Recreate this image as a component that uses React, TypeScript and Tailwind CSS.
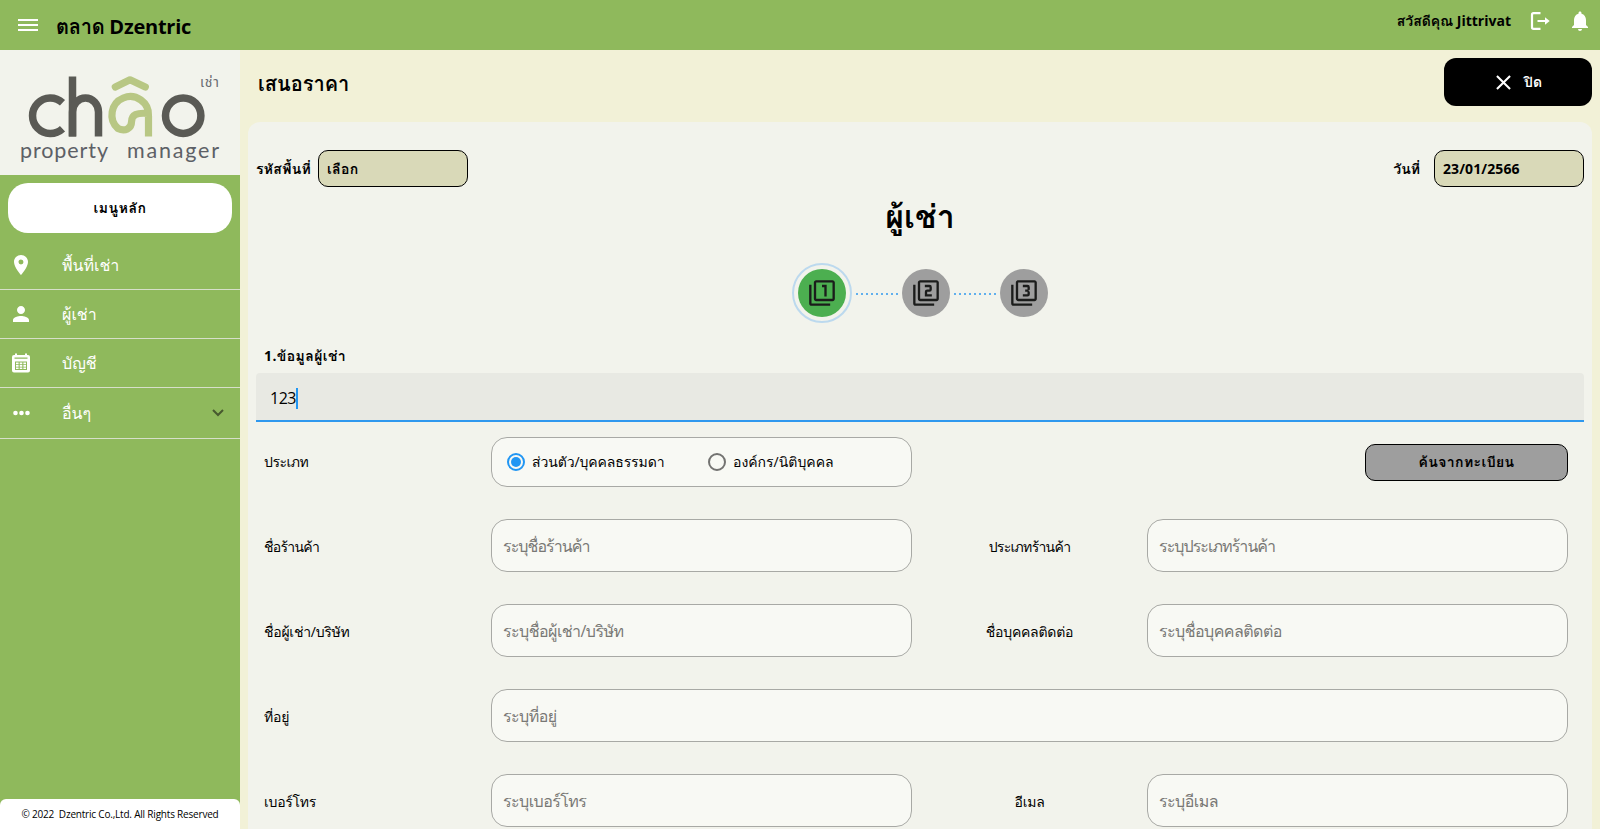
import React from "react";
import {
  MdPlace,
  MdPerson,
  MdNotifications,
  MdClose,
  MdFilter1,
  MdFilter2,
  MdFilter3,
} from "react-icons/md";

function MenuIcon() {
  return (
    <svg width="24" height="24" viewBox="0 0 24 24" fill="#fff">
      <path d="M2 6h20v2H2zM2 11h20v2H2zM2 16h20v2H2z" />
    </svg>
  );
}

function CalendarIcon() {
  return (
    <svg width="18" height="20" viewBox="0 0 18 20" fill="#fff">
      <path
        fillRule="evenodd"
        d="M2 2h1V.5h2V2h8V.5h2V2h1a2 2 0 0 1 2 2v13.500a2 2 0 0 1-2 2H2a2 2 0 0 1-2-2V4a2 2 0 0 1 2-2zM2.500 4.500v1.200h13V4.500zM3 8.500v8.500h12V8.500z"
      />
      <path d="M4 9.500h2.600v1.800H4zM7.700 9.500h2.600v1.800H7.700zM11.400 9.500H14v1.800h-2.600zM4 12h2.600v1.800H4zM7.700 12h2.600v1.800H7.700zM11.400 12H14v1.800h-2.600zM4 14.500h2.600v1.500H4zM7.700 14.500h2.600v1.500H7.700zM11.400 14.500H14v1.500h-2.600z" />
    </svg>
  );
}

function DotsIcon() {
  return (
    <svg width="17" height="6" viewBox="0 0 17 6" fill="#fff">
      <circle cx="2.500" cy="3" r="2.300" />
      <circle cx="8.500" cy="3" r="2.300" />
      <circle cx="14.500" cy="3" r="2.300" />
    </svg>
  );
}

function LogoutIcon() {
  return (
    <svg width="20" height="20" viewBox="0 0 20 20" fill="none" stroke="#fff" strokeWidth="2.200">
      <path d="M10.500 2.200H3.500a1.500 1.500 0 0 0-1.500 1.500v12.600a1.500 1.500 0 0 0 1.500 1.500h7" />
      <path d="M7.500 10h9" strokeWidth="2" />
      <path d="M15 6.300L19.700 10L15 13.700z" fill="#fff" stroke="none" />
    </svg>
  );
}

function Logo() {
  return (
    <svg width="240" height="125" viewBox="0 50 240 125" fill="none">
      <g stroke="#5a5a55" strokeWidth="7.500">
        <path d="M62.500 102.700A17.800 17.800 0 1 0 62.500 128.700" />
        <path d="M72.500 76.500V136.500" />
        <path d="M72.500 136.500V112a13 14 0 0 1 26 0V136.500" />
        <circle cx="183.200" cy="115.700" r="17.700" />
      </g>
      <g stroke="#b8c784" strokeWidth="7.200">
        <path d="M115.300 87L130 79.800L145.300 87" strokeLinecap="round" strokeLinejoin="round" />
        <path d="M148.500 136.500V116A18.300 18.300 0 1 0 118 128.500C125 132 131.500 128.500 131.500 122C131.500 114.500 137 112.500 148 113.500" />
      </g>
      <g fill="#5d6066" className="font-[Lato]">
        <text x="20" y="157.500" textLength="88" fontSize="21.500">property</text>
        <text x="127" y="157.500" textLength="92" fontSize="21.500">manager</text>
      </g>
      <text x="200" y="87" textLength="19" fontSize="14" fill="#6a6d72" className="font-['Noto_Sans_Thai']">เช่า</text>
    </svg>
  );
}

const menu = [
  { label: "พื้นที่เช่า", icon: <MdPlace size={24} />, h: "h-[49px]" },
  { label: "ผู้เช่า", icon: <MdPerson size={24} />, h: "h-[49px]" },
  { label: "บัญชี", icon: <CalendarIcon />, h: "h-[49px]" },
  { label: "อื่นๆ", icon: <DotsIcon />, h: "h-[51px]" },
];

function Field({ text }: { text: string }) {
  const tracking = text.includes("ร้านค้า") ? "tracking-[-0.95px]" : "tracking-[-0.55px]";
  return (
    <div className={`flex h-[53px] items-center rounded-2xl border border-[#a8a9a5] bg-[#f8f9f4] px-[11px] text-base text-[#787875] ${tracking}`}>
      {text}
    </div>
  );
}

function Label({ text }: { text: string }) {
  const tracking = text.includes("ร้านค้า") ? "tracking-[-0.7px]" : "tracking-[-0.25px]";
  return <span className={`text-sm ${tracking}`}>{text}</span>;
}

function Row({ a, pa, b, pb }: { a: string; pa: string; b?: string; pb?: string }) {
  return (
    <div className="flex h-[53px] shrink-0 items-center">
      <div className="w-[227px]">
        <Label text={a} />
      </div>
      <div className={b ? "w-[421px]" : "w-[1077px]"}>
        <Field text={pa} />
      </div>
      {b && pb && (
        <>
          <div className="w-[235px] text-center">
            <Label text={b} />
          </div>
          <div className="w-[421px]">
            <Field text={pb} />
          </div>
        </>
      )}
    </div>
  );
}

function Dots() {
  return (
    <div className="flex w-[50px] items-center justify-center gap-[3px] pt-px">
      {Array.from({ length: 9 }, (_, i) => (
        <span key={i} className="size-[2px] rounded-full bg-[#2f98ee]" />
      ))}
    </div>
  );
}

export default function App() {
  return (
    <div className="flex h-[829px] w-[1600px] flex-col overflow-hidden bg-[#f2f1d7] font-['Open_Sans','Loma','Noto_Sans_Thai',sans-serif] text-black">
      <header className="flex h-[50px] shrink-0 items-center bg-[#8fb95c] pl-4">
        <MenuIcon />
        <h1 className="ml-4 pt-1 text-xl font-bold tracking-[-0.25px]">ตลาด Dzentric</h1>
        <div className="ml-auto flex items-center pr-2 pb-2">
          <span className="text-sm font-bold">สวัสดีคุณ Jittrivat</span>
          <span className="ml-[19px]"><LogoutIcon /></span>
          <span className="ml-[18px]"><MdNotifications size={24} color="#fff" /></span>
        </div>
      </header>
      <div className="flex min-h-0 flex-1">
        <aside className="flex w-60 shrink-0 flex-col bg-[#8fb95c]">
          <div className="h-[125px] bg-[#f2f3ec]"><Logo /></div>
          <div className="mx-2 mt-2 mb-2 flex h-[50px] shrink-0 items-center justify-center rounded-[20px] bg-white text-sm font-bold tracking-[0.5px]">เมนูหลัก</div>
          {menu.map((m) => (
            <div key={m.label} className={`flex shrink-0 items-center border-b border-[#d6dfca] text-white ${m.h}`}>
              <span className="flex w-[42px] justify-center">{m.icon}</span>
              <span className="ml-5 text-base font-medium">{m.label}</span>
              {m.label === "อื่นๆ" && (
                <svg className="mr-4 ml-auto" width="12" height="8" viewBox="0 0 12 8" fill="none" stroke="#47592f" strokeWidth="2">
                  <path d="M1 1l5 5 5-5" />
                </svg>
              )}
            </div>
          ))}
          <footer className="mt-auto flex h-[30px] items-center justify-center rounded-t-md bg-white text-[10px] tracking-[-0.2px] whitespace-pre">© 2022  Dzentric Co.,Ltd. All Rights Reserved</footer>
        </aside>
        <main className="flex min-w-0 flex-1 flex-col px-2">
          <div className="flex h-[72px] shrink-0 items-start justify-between pt-2">
            <h2 className="mt-3 ml-[10px] text-xl font-bold">เสนอราคา</h2>
            <button className="flex h-12 w-[148px] items-center justify-center gap-2 rounded-xl bg-black pr-[3px] text-sm font-bold text-white">
              <MdClose size={25} />
              ปิด
            </button>
          </div>
          <section className="flex min-h-0 flex-1 flex-col overflow-hidden rounded-t-xl bg-[#f2f3ec] px-2 pt-7">
            <div className="flex h-[37px] shrink-0 items-center text-sm font-bold">
              <span className="w-[62px] tracking-[0.3px]">รหัสพื้นที่</span>
              <div className="flex h-full w-[150px] items-center rounded-[10px] border border-black bg-[#d9d9b8] px-2 tracking-[0.3px]">เลือก</div>
              <span className="mr-[14px] ml-auto">วันที่</span>
              <div className="flex h-full w-[150px] items-center rounded-[10px] border border-black bg-[#d9d9b8] px-2 tracking-[0.1px]">23/01/2566</div>
            </div>
            <h3 className="flex h-[60px] shrink-0 items-center justify-center pb-[3px] text-[32px] font-bold">ผู้เช่า</h3>
            <div className="flex h-[92px] shrink-0 items-center justify-center text-[#1b1c1b]">
              <div className="flex size-[60px] items-center justify-center rounded-full border-2 border-[#bcd9ee]">
                <div className="flex size-12 items-center justify-center rounded-full bg-[#4caf50]"><MdFilter1 size={28} /></div>
              </div>
              <Dots />
              <div className="flex size-12 items-center justify-center rounded-full bg-[#9e9e9e]"><MdFilter2 size={28} /></div>
              <Dots />
              <div className="flex size-12 items-center justify-center rounded-full bg-[#9e9e9e]"><MdFilter3 size={28} /></div>
            </div>
            <div className="flex h-[34px] shrink-0 items-center px-2 text-sm font-bold tracking-[0.4px]">1.ข้อมูลผู้เช่า</div>
            <div className="flex h-[49px] shrink-0 items-center rounded-t border-b-2 border-[#2f98ee] bg-[#e8e9e3] pt-[3px] pl-[14px] text-base">
              <span className="tracking-[-0.5px]">123</span>
              <span className="h-[21px] w-[2px] bg-[#2196f3]" />
            </div>
            <div className="flex flex-1 flex-col gap-8 px-2 pt-[15px]">
              <div className="flex h-[50px] shrink-0 items-center text-sm">
                <div className="w-[227px] tracking-[-0.5px]">ประเภท</div>
                <div className="flex h-[50px] w-[421px] items-center rounded-2xl border border-[#a8a9a5] bg-[#f8f9f4] pl-[15px]">
                  <span className="flex size-[18px] items-center justify-center rounded-full border-2 border-[#2196f3]"><span className="size-[10px] rounded-full bg-[#2196f3]" /></span>
                  <span className="ml-[7px] w-[176px] tracking-[-0.1px]">ส่วนตัว/บุคคลธรรมดา</span>
                  <span className="size-[18px] rounded-full border-2 border-[#737371]" />
                  <span className="ml-[7px]">องค์กร/นิติบุคคล</span>
                </div>
                <button className="mr-2 ml-auto flex h-[37px] w-[203px] items-center justify-center rounded-[10px] border border-black bg-[#9e9e9e] font-bold tracking-[0.4px]">ค้นจากทะเบียน</button>
              </div>
              <Row a="ชื่อร้านค้า" pa="ระบุชื่อร้านค้า" b="ประเภทร้านค้า" pb="ระบุประเภทร้านค้า" />
              <Row a="ชื่อผู้เช่า/บริษัท" pa="ระบุชื่อผู้เช่า/บริษัท" b="ชื่อบุคคลติดต่อ" pb="ระบุชื่อบุคคลติดต่อ" />
              <Row a="ที่อยู่" pa="ระบุที่อยู่" />
              <Row a="เบอร์โทร" pa="ระบุเบอร์โทร" b="อีเมล" pb="ระบุอีเมล" />
            </div>
          </section>
        </main>
      </div>
    </div>
  );
}
